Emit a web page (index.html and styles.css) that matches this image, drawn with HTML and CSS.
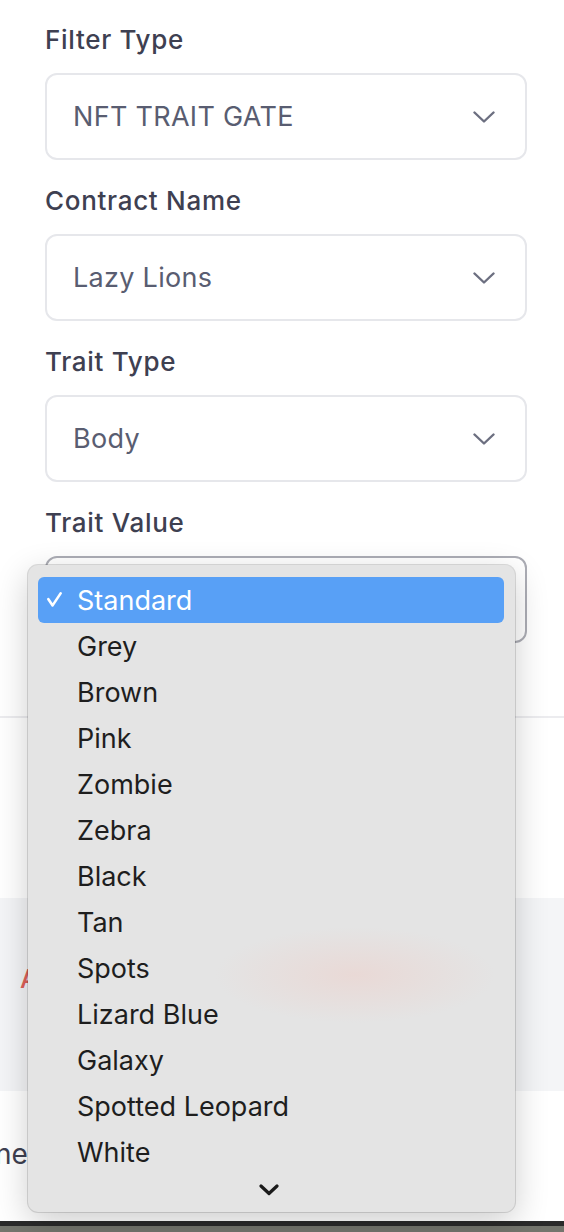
FILE: index.html
```html
<!DOCTYPE html>
<html lang="en">
<head>
<meta charset="utf-8">
<title>NFT Trait Gate Filter</title>
<link rel="stylesheet" href="styles.css">
</head>
<body>
<main class="page">
  <form class="form">
    <div class="field">
      <div class="label">Filter Type</div>
      <div class="select">
        <span class="select-value">NFT TRAIT GATE</span>
        <svg class="chev" width="22" height="12" viewBox="0 0 22 12"><path d="M1.5 1.5 L11 10.5 L20.5 1.5" fill="none" stroke="#6c6f80" stroke-width="2.4" stroke-linecap="round" stroke-linejoin="round"/></svg>
      </div>
    </div>
    <div class="field">
      <div class="label">Contract Name</div>
      <div class="select">
        <span class="select-value">Lazy Lions</span>
        <svg class="chev" width="22" height="12" viewBox="0 0 22 12"><path d="M1.5 1.5 L11 10.5 L20.5 1.5" fill="none" stroke="#6c6f80" stroke-width="2.4" stroke-linecap="round" stroke-linejoin="round"/></svg>
      </div>
    </div>
    <div class="field">
      <div class="label">Trait Type</div>
      <div class="select">
        <span class="select-value">Body</span>
        <svg class="chev" width="22" height="12" viewBox="0 0 22 12"><path d="M1.5 1.5 L11 10.5 L20.5 1.5" fill="none" stroke="#6c6f80" stroke-width="2.4" stroke-linecap="round" stroke-linejoin="round"/></svg>
      </div>
    </div>
    <div class="field">
      <div class="label">Trait Value</div>
      <div class="select select-open">
        <span class="select-value">Standard</span>
      </div>
    </div>
  </form>

  <hr class="divider">

  <section class="band">
    <span class="band-action">Add</span>
  </section>

  <p class="status">nected</p>
</main>
<footer class="desk"></footer>

<div class="menu">
  <ul class="menu-list">
    <li class="menu-item selected"><span class="check"><svg width="15" height="15" viewBox="0 0 15 15"><path d="M1.4 7.2 L5.6 13.4 L13.6 1.4" fill="none" stroke="#ffffff" stroke-width="2.6" stroke-linecap="round" stroke-linejoin="round"/></svg></span>Standard</li>
    <li class="menu-item"><span class="check"></span>Grey</li>
    <li class="menu-item"><span class="check"></span>Brown</li>
    <li class="menu-item"><span class="check"></span>Pink</li>
    <li class="menu-item"><span class="check"></span>Zombie</li>
    <li class="menu-item"><span class="check"></span>Zebra</li>
    <li class="menu-item"><span class="check"></span>Black</li>
    <li class="menu-item"><span class="check"></span>Tan</li>
    <li class="menu-item"><span class="check"></span>Spots</li>
    <li class="menu-item"><span class="check"></span>Lizard Blue</li>
    <li class="menu-item"><span class="check"></span>Galaxy</li>
    <li class="menu-item"><span class="check"></span>Spotted Leopard</li>
    <li class="menu-item"><span class="check"></span>White</li>
  </ul>
  <div class="menu-more"><svg width="20" height="12" viewBox="0 0 20 12"><path d="M2 2 L10 9.5 L18 2" fill="none" stroke="#1a1a1a" stroke-width="3.2" stroke-linecap="round" stroke-linejoin="round"/></svg></div>
</div>
</body>
</html>
```

FILE: styles.css
```css
* { box-sizing: border-box; }

html, body {
  margin: 0;
  padding: 0;
}

body {
  width: 564px;
  height: 1232px;
  overflow: hidden;
  position: relative;
  background: #ffffff;
  font-family: Inter, "Liberation Sans", sans-serif;
  display: flex;
  flex-direction: column;
}

.page {
  flex: 1;
  padding-top: 22px;
  display: flex;
  flex-direction: column;
}

.form {
  margin: 0;
  padding: 0 37px 0 45px;
  display: flex;
  flex-direction: column;
}

.field {
  display: flex;
  flex-direction: column;
}

.label {
  font-size: 26px;
  font-weight: 500;
  line-height: 34px;
  height: 34px;
  color: #3e4051;
  letter-spacing: 0.7px;
  margin-bottom: 17px;
  padding-top: 1px;
}

.select {
  height: 87px;
  border: 2px solid #e6e7eb;
  border-radius: 12px;
  display: flex;
  align-items: center;
  justify-content: space-between;
  padding: 0 30px 0 26px;
  margin-bottom: 23px;
  background: #fff;
}

.select-open {
  border-color: #acadb5;
}

.select-value {
  font-size: 27px;
  font-weight: 400;
  color: #595d71;
  letter-spacing: 0.3px;
}

.chev { display: block; }

.divider {
  margin: 50px 0 0;
  border: 0;
  height: 2px;
  background: #ececef;
}

.band {
  margin-top: 180px;
  height: 193px;
  background: #f4f5f7;
  padding: 64px 0 0 20px;
}

.band-action {
  font-size: 26px;
  line-height: 34px;
  font-weight: 500;
  color: #e0625a;
}

.status {
  margin: 45px 0 0 -5px;
  font-size: 28px;
  line-height: 36px;
  color: #3e4051;
}

.desk {
  height: 11px;
  border-top: 5px solid #2a2a2a;
  background: #74756d;
}

/* native select popup overlaying the page */
.menu {
  position: absolute;
  left: 28px;
  top: 565px;
  width: 487px;
  height: 647px;
  border-radius: 10px;
  background:
    radial-gradient(ellipse 140px 48px at 327px 410px, rgba(238, 206, 200, 0.5), rgba(238, 206, 200, 0) 100%),
    #e4e4e4;
  box-shadow: 0 0 0 1px rgba(0, 0, 0, 0.13), 0 10px 34px rgba(0, 0, 0, 0.2);
  padding: 12px 11px 0 10px;
  font-family: Inter, "Liberation Sans", sans-serif;
}

.menu-list {
  list-style: none;
  margin: 0;
  padding: 0;
}

.menu-item {
  height: 46px;
  display: flex;
  align-items: center;
  padding-left: 9px;
  font-size: 27px;
  color: #1e1e1e;
  border-radius: 6px;
}

.menu-item.selected {
  background: #58a0f6;
  color: #ffffff;
}

.check {
  width: 30px;
  display: flex;
  align-items: center;
  padding-bottom: 1px;
}

.menu-more {
  height: 30px;
  display: flex;
  justify-content: center;
  align-items: center;
  padding-right: 4px;
}
```
